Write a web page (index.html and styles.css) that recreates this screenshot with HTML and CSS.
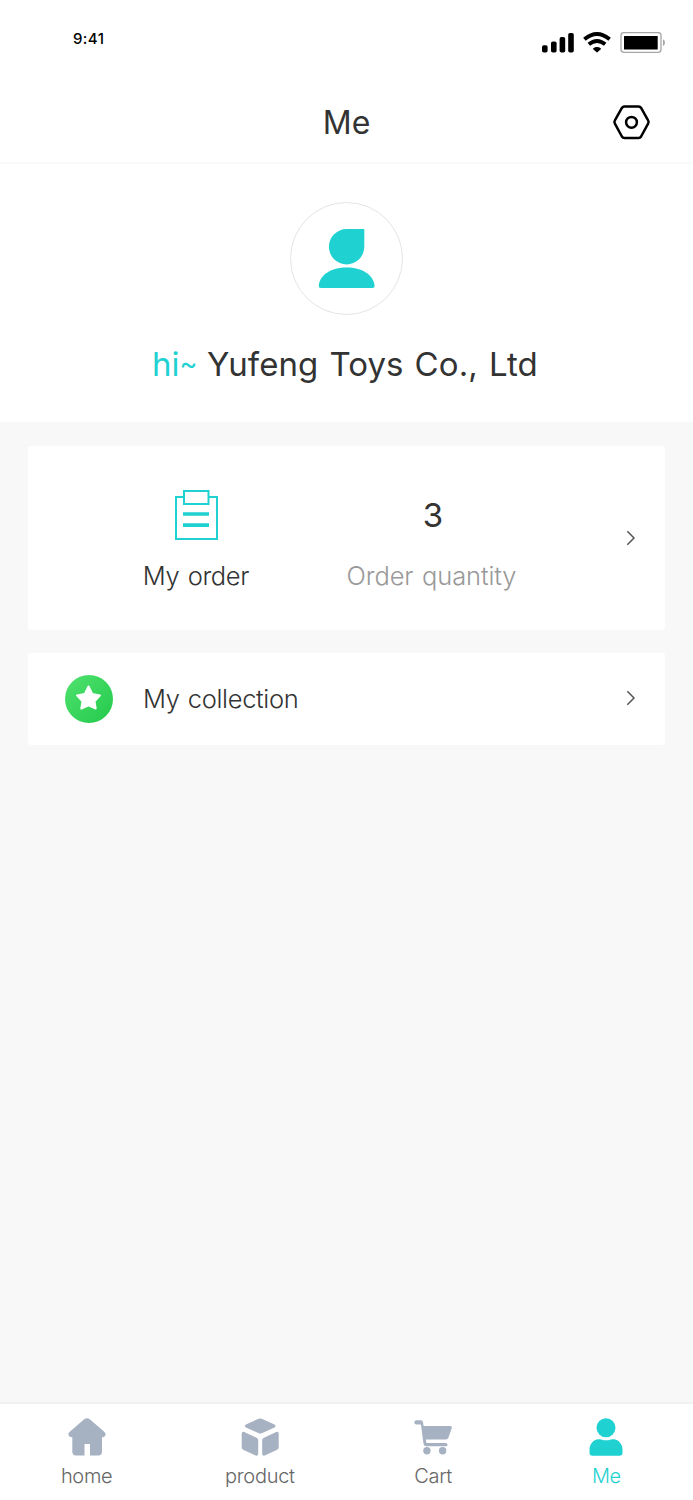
FILE: index.html
```html
<!DOCTYPE html>
<html lang="en">
<head>
<meta charset="utf-8">
<title>Me</title>
<link rel="stylesheet" href="styles.css">
</head>
<body>
<div class="app">
  <div class="status">
    <span class="time">9:41</span>
    <svg class="status-icons" width="126" height="24" viewBox="540 30 126 24">
      <g fill="#000">
        <rect x="542" y="45.2" width="5.6" height="7.4" rx="1.8"/>
        <rect x="551" y="41.5" width="5.6" height="11.1" rx="1.8"/>
        <rect x="559.6" y="37.1" width="5.6" height="15.5" rx="1.8"/>
        <rect x="568.2" y="33" width="5.6" height="19.6" rx="1.8"/>
        <path d="M593 48.5Q597 45.700 601 48.500L600.500 49.600L597.700 52.100Q597 52.700 596.300 52.100L593.500 49.600Z"/>
      </g>
      <g fill="none" stroke="#000" stroke-width="3.900">
        <path d="M584.400 39.200Q597 28.800 609.600 39.200"/>
        <path d="M588.800 44.300Q597 37.500 605.200 44.300"/>
      </g>
      <rect x="621" y="32.700" width="40" height="19.600" rx="2.800" fill="#fff" stroke="#a6a6a6" stroke-width="1.300"/>
      <rect x="624" y="36" width="33.700" height="13.500" rx=".6"/>
      <path d="M663 39.200Q665 40 665 42.600Q665 45.200 663 46Z" fill="#a6a6a6"/>
    </svg>
  </div>
  <header class="header">
    <h1 class="title">Me</h1>
    <svg class="settings" width="40" height="36" viewBox="0 0 40 36" fill="none" stroke="#000">
      <path d="M13.400 2.500H27.600Q29.200 2.500 30.100 4L37.100 16.400Q38.100 18 37.100 19.600L30.100 32.500Q29.200 34 27.600 34H13.400Q11.800 34 10.900 32.500L3.900 19.600Q2.900 18 3.900 16.400L10.900 4Q11.800 2.500 13.400 2.500Z" stroke-width="2.500"/>
      <circle cx="20.500" cy="18.300" r="5.400" stroke-width="2.500"/>
    </svg>
  </header>
  <section class="profile">
    <svg class="avatar" width="113" height="113" viewBox="0 0 113 113" fill="#1fd1d1">
      <circle cx="56.500" cy="56.500" r="56" fill="#fff" stroke="#e4e4e4"/>
      <path d="M56.500 27H74.300V44.800A17.700 17.700 0 1 1 56.500 27Z"/>
      <path d="M31.100 86Q28.500 86 28.800 83.500C30.100 72.500 41.300 65.500 56.600 65.500S83.300 72.500 84.600 83.500Q84.800 86 82.200 86Z"/>
    </svg>
    <p class="greeting"><span class="hi">hi<span class="tilde">~</span></span><span class="name">Yufeng Toys Co., Ltd</span></p>
  </section>
  <main class="content">
    <a class="card orders">
      <div class="cell my-order">
        <svg width="44" height="50" viewBox="0 0 44 50" fill="none" stroke="#1fd1d1" stroke-width="2">
          <path d="M9.500 7H2V49H43V7H35"/>
          <rect x="10" y="1" width="24.500" height="13"/>
          <path d="M9 24H35M9 35.200H35" stroke-width="3.700"/>
        </svg>
        <span class="label order-label">My order</span>
      </div>
      <div class="cell quantity">
        <strong class="count">3</strong>
        <span class="label quantity-label">Order quantity</span>
      </div>
      <svg class="arrow" width="12" height="16" viewBox="0 0 12 16"><path d="M2.300 1.300L9 8L2.300 14.700"/></svg>
    </a>
    <a class="card collection">
      <svg class="badge" width="48" height="48" viewBox="0 0 48 48">
        <defs><linearGradient id="green" x1="0" y1="0" x2="1" y2="1"><stop offset="0" stop-color="#50e26f"/><stop offset="1" stop-color="#23c94b"/></linearGradient></defs>
        <circle cx="24" cy="24" r="24" fill="url(#green)"/>
        <path d="M23.500 11.500L27.200 19L35 20.400L29.500 26.300L30.700 33.500L23.500 30.300L16.300 33.500L17.500 26.300L12 20.400L19.800 19Z" fill="#fff" stroke="#fff" stroke-width="2" stroke-linejoin="round"/>
      </svg>
      <span class="label collection-label">My collection</span>
      <svg class="arrow" width="12" height="16" viewBox="0 0 12 16"><path d="M2.300 1.300L9 8L2.300 14.700"/></svg>
    </a>
  </main>
  <nav class="tabs">
    <a class="tab home">
      <svg width="38" height="38" viewBox="0 0 38 38"><path d="M16.200 1.300Q19 -.9 21.800 1.300L36.500 14Q38.500 16 37 18Q36 19.200 34 19.200V33.800Q34 37.500 30.300 37.500H22V26H16.500V37.500H8Q4.300 37.500 4.300 33.800V19.200Q2 19.200 1 18Q-.5 16 1.500 14Z"/></svg>
      <span>home</span>
    </a>
    <a class="tab product">
      <svg width="38" height="38" viewBox="-.2 -.2 38 38"><path d="M17.500.5Q19 0 20.500.5L33.300 6.300Q35.300 7.700 33.300 9.200L20.500 15Q19 15.700 17.500 15L4.700 9.200Q2.700 7.700 4.700 6.300Z"/><path d="M.5 15.500Q.7 13 3 13.800L15.300 19.500Q17 20.400 17 22V35.500Q16.800 38 14.500 37.300L2 31.500Q.5 30.800.5 29Z"/><path d="M37.500 15.500Q37.300 13 35 13.800L22.700 19.500Q21 20.400 21 22V35.500Q21.200 38 23.500 37.300L36 31.500Q37.500 30.800 37.500 29Z"/></svg>
      <span>product</span>
    </a>
    <a class="tab cart">
      <svg width="38" height="38" viewBox="-.4 -.3 38 38"><path d="M2.100 2H6.500Q8.300 2 8.600 3.800L9.200 7.800H35.700Q37.900 7.800 37.300 10L34 19.400Q33.300 21.100 31.500 21.100H11.500L12 24.800H31.500A1.600 1.600 0 0 1 31.500 28H12.200Q9.500 28 9.100 25.500L6.500 6.300H2.100A2.150 2.150 0 0 1 2.100 2Z"/><circle cx="12.500" cy="32.500" r="3.700"/><circle cx="28.200" cy="32.500" r="3.700"/></svg>
      <span>Cart</span>
    </a>
    <a class="tab me">
      <svg width="38" height="38" viewBox="0 -.2 38 38"><circle cx="19" cy="9.500" r="9.500"/><path d="M11.500 21Q13 20.800 14.200 21.300Q19 23 23.800 21.300Q25 20.800 26.500 21C32 21.500 35.500 26 35.500 31.500V34.500Q35.500 37.500 32.500 37.500H5.500Q2.500 37.500 2.500 34.500V31.500C2.500 26 6 21.500 11.500 21Z"/></svg>
      <span>Me</span>
    </a>
  </nav>
</div>
</body>
</html>
```
FILE: styles.css
```css
* { box-sizing: border-box; }
body { margin: 0; font-family: Inter, "Liberation Sans", sans-serif; color: #333; }
svg { display: block; flex: none; }
.app { width: 693px; height: 1500px; display: flex; flex-direction: column; background: #f8f8f8; }
.status { height: 80px; padding: 28px 27px 0 73px; display: flex; justify-content: space-between; background: #fff; color: #000; }
.time { padding-top: 1px; font-size: 15px; line-height: 20px; font-weight: 500; letter-spacing: .4px; }
.status-icons { margin-top: 2px; }
.header { height: 84px; display: grid; grid-template-columns: 1fr auto 1fr; align-items: center; padding: 2px 42px 0; background: #fff; border-bottom: 2px solid #fafafa; }
.title { grid-column: 2; margin: 0; padding-top: 2px; font-size: 32px; line-height: 40px; font-weight: 400; }
.settings { justify-self: end; }
.profile { height: 258px; padding-top: 37.500px; display: flex; flex-direction: column; align-items: center; background: #fff; }
.greeting { margin: 28.500px 0 0; width: 389px; display: flex; font-size: 33px; line-height: 42px; white-space: nowrap; }
.hi { width: 55px; color: #1fd1d1; }
.tilde { font-size: 27px; line-height: 1; vertical-align: 3px; }
.name { letter-spacing: .1px; word-spacing: 1.600px; }
.content { flex: 1; padding: 23.500px 28px 0; display: flex; flex-direction: column; gap: 23px; }
.card { display: flex; background: #fff; border-radius: 3px; }
.orders { height: 184.500px; padding: 44.500px 28px 0 68px; }
.cell { display: flex; flex-direction: column; align-items: center; }
.my-order { width: 200px; }
.quantity { width: 271px; }
.label { font-size: 25.500px; line-height: 32px; font-weight: 300; letter-spacing: -.35px; word-spacing: 1.500px; white-space: nowrap; }
.order-label { margin-top: 20px; }
.count { font-size: 33px; line-height: 42px; font-weight: 400; margin: 4px 0 0 3px; }
.quantity-label { margin-top: 24px; color: #999; letter-spacing: -.1px; }
.arrow { fill: none; stroke: #555; stroke-width: 1.500; }
.orders .arrow { margin: 40px 0 0 auto; }
.collection { height: 92px; align-items: center; padding: 0 28px 0 37px; }
.collection-label { margin-left: 30px; }
.collection .arrow { margin: -3px 0 0 auto; }
.tabs { height: 98px; padding-top: 14px; display: grid; grid-template-columns: repeat(4, 1fr); background: #fff; border-top: 2px solid #f1f1f1; }
.tab { display: flex; flex-direction: column; align-items: center; gap: 8px; fill: #a6b1c2; color: #666; font-size: 20px; line-height: 24px; font-weight: 300; letter-spacing: -.3px; }
.me { fill: #1fd1d1; color: #1fd1d1; }
```
